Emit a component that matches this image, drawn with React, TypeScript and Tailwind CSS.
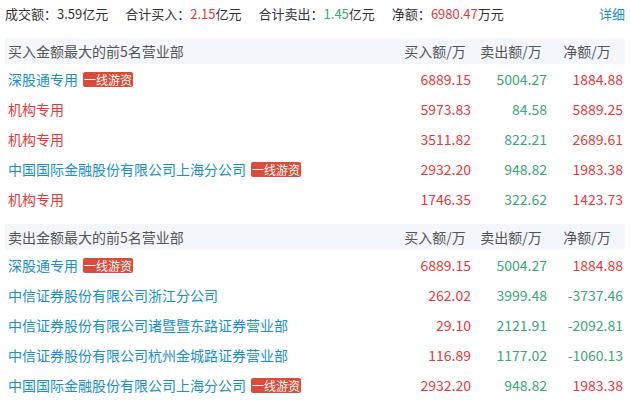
const RED = "text-[#e8393a]";
const GREEN = "text-[#3aa776]";
const BLUE = "text-[#1a8fd0]";

type Row = {
  name: string;
  tag?: boolean;
  org?: boolean;
  buy: string;
  sell: string;
  net: string;
};

const buyTop: Row[] = [
  { name: "深股通专用", tag: true, buy: "6889.15", sell: "5004.27", net: "1884.88" },
  { name: "机构专用", org: true, buy: "5973.83", sell: "84.58", net: "5889.25" },
  { name: "机构专用", org: true, buy: "3511.82", sell: "822.21", net: "2689.61" },
  { name: "中国国际金融股份有限公司上海分公司", tag: true, buy: "2932.20", sell: "948.82", net: "1983.38" },
  { name: "机构专用", org: true, buy: "1746.35", sell: "322.62", net: "1423.73" },
];

const sellTop: Row[] = [
  { name: "深股通专用", tag: true, buy: "6889.15", sell: "5004.27", net: "1884.88" },
  { name: "中信证券股份有限公司浙江分公司", buy: "262.02", sell: "3999.48", net: "-3737.46" },
  { name: "中信证券股份有限公司诸暨暨东路证券营业部", buy: "29.10", sell: "2121.91", net: "-2092.81" },
  { name: "中信证券股份有限公司杭州金城路证券营业部", buy: "116.89", sell: "1177.02", net: "-1060.13" },
  { name: "中国国际金融股份有限公司上海分公司", tag: true, buy: "2932.20", sell: "948.82", net: "1983.38" },
];

function Section({ title, rows }: { title: string; rows: Row[] }) {
  return (
    <div>
      <div className="flex h-[26px] items-center bg-[#f3f6fa] text-[14px] text-[#555]">
        <div className="flex-1 pl-[3px]">{title}</div>
        <div className="w-[76px] text-center">买入额/万</div>
        <div className="w-[76px] text-center">卖出额/万</div>
        <div className="w-[76px] text-center">净额/万</div>
      </div>
      {rows.map((r, i) => (
        <div key={i} className="flex h-[30px] items-center text-[14px]">
          <div className={`flex flex-1 items-center pl-[3px] ${r.org ? RED : BLUE}`}>
            {r.name}
            {r.tag && (
              <span className="ml-[5px] h-[15px] rounded-[2px] bg-[#dc4a38] px-[1px] text-[12px] leading-[15px] text-white">
                一线游资
              </span>
            )}
          </div>
          <div className={`w-[76px] pr-[2px] text-right ${RED}`}>{r.buy}</div>
          <div className={`w-[76px] pr-[2px] text-right ${GREEN}`}>{r.sell}</div>
          <div className={`w-[76px] pr-[2px] text-right ${r.net.startsWith("-") ? GREEN : RED}`}>
            {r.net}
          </div>
        </div>
      ))}
    </div>
  );
}

export default function App() {
  return (
    <div className="h-[403px] w-[631px] bg-white pl-[5px] pr-[6px] font-['Noto_Sans_CJK_SC','Noto_Sans',sans-serif]">
      <div className="mb-[10px] flex h-[28px] items-center text-[13px] text-[#333]">
        <span>
          成交额：3.59亿元
        </span>
        <span className="ml-[17px]">
          合计买入：<span className={RED}>2.15</span>亿元
        </span>
        <span className="ml-[17px]">
          合计卖出：<span className={GREEN}>1.45</span>亿元
        </span>
        <span className="ml-[17px]">
          净额：<span className={RED}>6980.47</span>万元
        </span>
        <span className={`ml-auto ${BLUE}`}>详细</span>
      </div>
      <Section title="买入金额最大的前5名营业部" rows={buyTop} />
      <div className="h-[10px]" />
      <Section title="卖出金额最大的前5名营业部" rows={sellTop} />
    </div>
  );
}
